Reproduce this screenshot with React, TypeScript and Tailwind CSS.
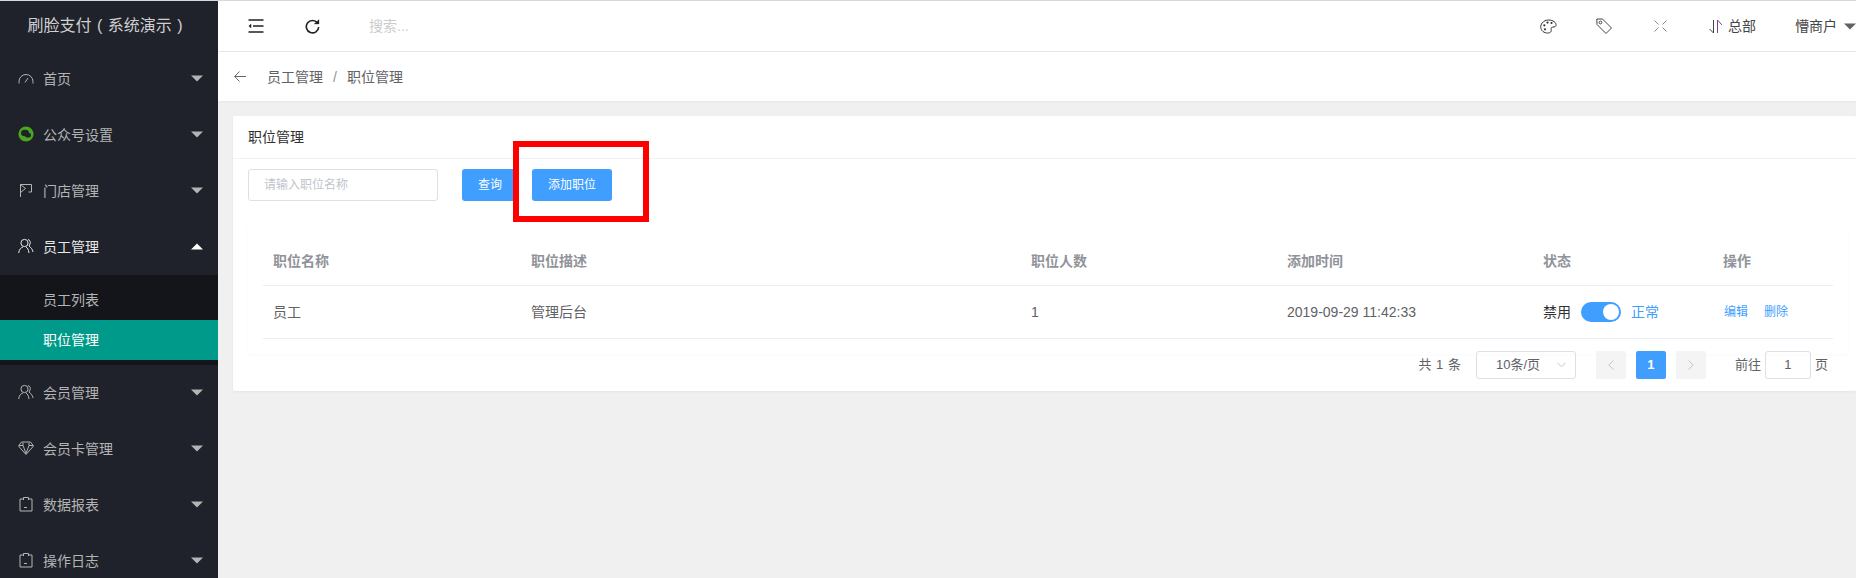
import React from "react";

const FONT = "[font-family:'Liberation_Sans','Noto_Sans_CJK_SC',sans-serif]";

function Caret({ up = false, className = "" }: { up?: boolean; className?: string }) {
  return (
    <svg width="12" height="7" viewBox="0 0 12 7" className={className}>
      <path d={up ? "M0 6.5 L6 0.5 L12 6.5 Z" : "M0 0.5 L12 0.5 L6 6.5 Z"} fill="currentColor" />
    </svg>
  );
}

const S = { fill: "none", stroke: "currentColor", strokeWidth: 1 } as const;

const IconGauge = () => (
  <svg width="16" height="16" viewBox="0 0 16 16" {...S}>
    <path d="M1 13.5 V11.5 A7 7 0 0 1 15 11.5 V13.5" />
    <path d="M7 12.5 L10 8" />
  </svg>
);
const IconWechat = () => (
  <svg width="16" height="16" viewBox="0 0 16 16">
    <circle cx="8" cy="8" r="7.6" fill="#49a61e" />
    <ellipse cx="7" cy="7" rx="4" ry="3.2" fill="#1f222b" />
    <ellipse cx="10" cy="9.2" rx="3" ry="2.4" fill="#1f222b" />
  </svg>
);
const IconFlag = () => (
  <svg width="16" height="16" viewBox="0 0 16 16" {...S}>
    <path d="M2.5 15 V2.5 H13.5 V10 H10.5 M2.5 2.5 L7.5 6.5 L2.5 10.5" />
  </svg>
);
const IconUsers = () => (
  <svg width="16" height="16" viewBox="0 0 16 16" {...S}>
    <circle cx="6.5" cy="5" r="3.6" />
    <path d="M0.7 15 C1 11.5 3 9.5 5 9 M8 9 C9.5 9.8 10.5 11.5 11 15" />
    <path d="M10 1.5 C12 2 12.8 4 12 6 L11 8 C13 9.5 14.7 11.5 15 14" />
  </svg>
);
const IconDiamond = () => (
  <svg width="16" height="16" viewBox="0 0 16 16" {...S}>
    <path d="M3.5 2 H12.5 L15.5 6 L8 14.5 L0.5 6 Z" />
    <path d="M1 5.5 L5 5.5 L8 13.5 L11 5.5 L15 5.5 M5 2.5 L5 5.5 M11 2.5 L11 5.5" />
  </svg>
);
const IconClip = () => (
  <svg width="16" height="16" viewBox="0 0 16 16" {...S}>
    <path d="M5 3 H2 V15 H14 V3 H11" />
    <path d="M5.5 4 V1.5 H10.5 V4" />
    <path d="M6 11.5 H9" />
  </svg>
);

const menuTop = [
  { label: "首页", icon: <IconGauge /> },
  { label: "公众号设置", icon: <IconWechat /> },
  { label: "门店管理", icon: <IconFlag /> },
];
const menuBottom = [
  { label: "会员管理", icon: <IconUsers /> },
  { label: "会员卡管理", icon: <IconDiamond /> },
  { label: "数据报表", icon: <IconClip /> },
  { label: "操作日志", icon: <IconClip /> },
];

function MenuItem({ label, icon, open = false }: { label: string; icon: React.ReactNode; open?: boolean }) {
  return (
    <div className={`flex h-[56px] shrink-0 items-center pl-[18px] pr-[15px] text-sm ${open ? "text-[#e8e8e8]" : "text-[#b4b4b4]"}`}>
      <span className="mb-[2px] flex w-[25px] shrink-0 items-center">{icon}</span>
      <span className="flex-1">{label}</span>
      <Caret up={open} className={`mb-[2px] ${open ? "text-white" : "text-[#b4b4b4]"}`} />
    </div>
  );
}

function Sidebar() {
  return (
    <aside className="flex h-full w-[218px] shrink-0 flex-col overflow-hidden bg-[#1f222b]">
      <div className="flex h-[50px] shrink-0 items-center justify-center pr-[8px] text-base text-[#cfcfcf] [word-spacing:1px]">刷脸支付 ( 系统演示 )</div>
      {menuTop.map((m) => (
        <MenuItem key={m.label} {...m} />
      ))}
      <MenuItem label="员工管理" icon={<IconUsers />} open />
      <div className="h-[90px] shrink-0 bg-[#14151a] pt-[5px]">
        <div className="flex h-[40px] items-center pl-[43px] text-sm text-[#b4b4b4]">员工列表</div>
        <div className="flex h-[40px] items-center bg-[#009a8a] pl-[43px] text-sm text-white">职位管理</div>
      </div>
      {menuBottom.map((m) => (
        <MenuItem key={m.label} {...m} />
      ))}
    </aside>
  );
}

function Topbar() {
  return (
    <header className="flex h-[51px] shrink-0 items-center border-b border-[#e6e6e6] bg-white pl-[30px] text-[#303133]">
      <svg width="16" height="14" viewBox="0 0 16 14" className="mr-[41px]" fill="none" stroke="#222" strokeWidth="1.4">
        <path d="M0.5 1 H15.5 M5 7 H15.5 M0.5 13 H15.5" />
        <path d="M3 5.2 V8.8 L0.8 7 Z" fill="#222" strokeWidth="0.5" />
      </svg>
      <svg width="15" height="15" viewBox="0 0 15 15" className="mr-[49px]" fill="none" stroke="#222" strokeWidth="1.6">
        <path d="M12.5 4 A6.2 6.2 0 1 0 13.7 8" />
        <path d="M9.2 5 H14 V0.6 Z" fill="#222" strokeWidth="0.3" />
      </svg>
      <span className="text-sm text-[#cccccc]">搜索...</span>
      <div className="ml-auto flex items-center">
        <svg width="17" height="15" viewBox="0 0 17 15" className="mr-[39px]" fill="none" stroke="#333" strokeWidth="1">
          <path d="M8.5 1 C13 1 16.5 3.5 16 6.5 C15.6 8.6 12.5 7.6 11.5 8.6 C10.5 9.8 11.8 11 11 12.6 C9.8 14.6 5.5 14.5 3 12.5 C0.3 10.2 0 6.5 2.2 4 C3.8 2 6 1 8.5 1 Z" />
          <circle cx="4.3" cy="6.3" r="1.1" fill="#333" stroke="none" />
          <circle cx="7.5" cy="3.6" r="1.1" fill="#333" stroke="none" />
          <circle cx="11.5" cy="4" r="1.1" fill="#333" stroke="none" />
          <circle cx="5" cy="10.3" r="1.1" fill="#333" stroke="none" />
        </svg>
        <svg width="16" height="16" viewBox="0 0 16 16" className="mr-[42px]" fill="none" stroke="#444" strokeWidth="1">
          <path d="M0.8 1 H6.5 L15.5 10 L10 15.5 L1 6.5 Z" />
          <circle cx="4.5" cy="4.5" r="1.4" />
        </svg>
        <svg width="13" height="12" viewBox="0 0 13 12" className="mr-[42px]" fill="none" stroke="#888" strokeWidth="1">
          <path d="M0.5 0.5 L4.5 4.5 M12.5 0.5 L8.5 4.5 M0.5 11.5 L4.5 7.5 M12.5 11.5 L8.5 7.5" />
        </svg>
        <svg width="14" height="15" viewBox="0 0 14 15" className="mr-[5px]" fill="none" stroke="#444" strokeWidth="1">
          <path d="M4.5 1 V14 L0.5 10" />
          <path d="M8.5 14 V1 L13 6" stroke="#7a3fa0" />
        </svg>
        <span className="mr-[39px] text-[14px] text-[#444]">总部</span>
        <span className="mr-[7px] text-[14px] text-[#444]">懵商户</span>
        <Caret className="text-[#606266]" />
      </div>
    </header>
  );
}

function Breadcrumb() {
  return (
    <div className="flex h-[49px] shrink-0 items-center bg-white pl-[16px] text-sm text-[#606266] shadow-[0_1px_2px_rgba(0,0,0,0.04)]">
      <svg width="12" height="11" viewBox="0 0 12 11" className="mr-[21px]" fill="none" stroke="#666" strokeWidth="1">
        <path d="M12 5.5 H0.8 M5.5 0.5 L0.7 5.5 L5.5 10.5" />
      </svg>
      <span>员工管理</span>
      <span className="mx-[10px] text-[#909399]">/</span>
      <span>职位管理</span>
    </div>
  );
}

const cols = ["w-[258px]", "w-[500px]", "w-[256px]", "w-[256px]", "w-[180px]", "w-[120px]"];
const headers = ["职位名称", "职位描述", "职位人数", "添加时间", "状态", "操作"];

function RolesTable() {
  return (
    <div className="ml-[15px] mr-[8px] rounded-[2px] bg-white px-[15px] pb-[15px] pt-[15px] shadow-[0_1px_3px_rgba(0,0,0,0.025)]">
      <div className="flex h-[49px] items-center border-b border-[#ebeef5] text-sm font-bold text-[#909399]">
        {headers.map((h, i) => (
          <div key={h} className={`${cols[i]} pl-[10px]`}>
            {h}
          </div>
        ))}
      </div>
      <div className="flex h-[53px] items-center border-b border-[#ebeef5] text-sm text-[#606266]">
        <div className={`${cols[0]} pl-[10px]`}>员工</div>
        <div className={`${cols[1]} pl-[10px]`}>管理后台</div>
        <div className={`${cols[2]} pl-[10px]`}>1</div>
        <div className={`${cols[3]} pl-[10px]`}>2019-09-29 11:42:33</div>
        <div className={`${cols[4]} flex items-center pl-[10px]`}>
          <span className="text-[#303133]">禁用</span>
          <span className="mx-[10px] flex h-[20px] w-[40px] items-center justify-end rounded-full bg-[#409eff] pr-[2px]">
            <span className="h-[16px] w-[16px] rounded-full bg-white" />
          </span>
          <span className="text-[#409eff]">正常</span>
        </div>
        <div className={`${cols[5]} flex gap-[16px] pl-[11px] text-xs text-[#409eff]`}>
          <span>编辑</span>
          <span>删除</span>
        </div>
      </div>
    </div>
  );
}

function Pagination() {
  const box = "flex h-[28px] w-[30px] items-center justify-center rounded-[2px]";
  return (
    <div className="-mt-[3px] flex items-center justify-end pb-[12px] pr-[28px] text-[13px] text-[#606266]">
      <span className="mr-[15px] [word-spacing:1px]">共 1 条</span>
      <div className="mr-[20px] flex h-[28px] w-[100px] items-center rounded-[3px] border border-[#dcdfe6] pl-[19px] pr-[9px]">
        <span className="flex-1">10条/页</span>
        <svg width="9" height="6" viewBox="0 0 9 6" fill="none" stroke="#c0c4cc" strokeWidth="1">
          <path d="M0.5 0.8 L4.5 4.8 L8.5 0.8" />
        </svg>
      </div>
      <div className={`${box} mr-[10px] bg-[#f4f4f5]`}>
        <svg width="6" height="10" viewBox="0 0 6 10" fill="none" stroke="#c0c4cc" strokeWidth="1">
          <path d="M5.5 0.5 L0.8 5 L5.5 9.5" />
        </svg>
      </div>
      <div className={`${box} mr-[10px] bg-[#409eff] font-bold text-white`}>1</div>
      <div className={`${box} mr-[29px] bg-[#f4f4f5]`}>
        <svg width="6" height="10" viewBox="0 0 6 10" fill="none" stroke="#c0c4cc" strokeWidth="1">
          <path d="M0.5 0.5 L5.2 5 L0.5 9.5" />
        </svg>
      </div>
      <span className="mr-[4px]">前往</span>
      <div className="mr-[4px] flex h-[28px] w-[46px] items-center justify-center rounded-[3px] border border-[#dcdfe6]">1</div>
      <span>页</span>
    </div>
  );
}

export default function App() {
  return (
    <div className={`flex h-[578px] w-[1856px] flex-col overflow-hidden bg-[#f0f0f0] ${FONT}`}>
      <div className="h-px shrink-0 bg-[#d8d8d8]" />
      <div className="flex min-h-0 flex-1">
        <Sidebar />
        <main className="flex min-w-0 flex-1 flex-col">
          <Topbar />
          <Breadcrumb />
          <div className="pl-[15px] pt-[15px]">
            <section className="relative rounded-[2px] bg-white shadow-[0_1px_3px_rgba(0,0,0,0.05)]">
              <div className="flex h-[43px] items-center border-b border-[#f2f2f2] pl-[15px] text-sm text-[#303133]">职位管理</div>
              <div className="flex h-[63px] items-start pl-[15px] pt-[10px]">
                <div className="flex h-[32px] w-[190px] items-center rounded-[3px] border border-[#dcdfe6] pl-[15px] text-xs text-[#c0c4cc]">请输入职位名称</div>
                <button className="ml-[24px] flex h-[32px] w-[56px] items-center justify-center rounded-[3px] bg-[#409eff] text-xs text-white">查询</button>
                <button className="ml-[14px] flex h-[32px] w-[80px] items-center justify-center rounded-[3px] bg-[#409eff] text-xs text-white">添加职位</button>
              </div>
              <RolesTable />
              <Pagination />
              <div className="absolute left-[280px] top-[25px] h-[81px] w-[136px] border-[6px] border-[#ff0000]" />
            </section>
          </div>
        </main>
      </div>
    </div>
  );
}
